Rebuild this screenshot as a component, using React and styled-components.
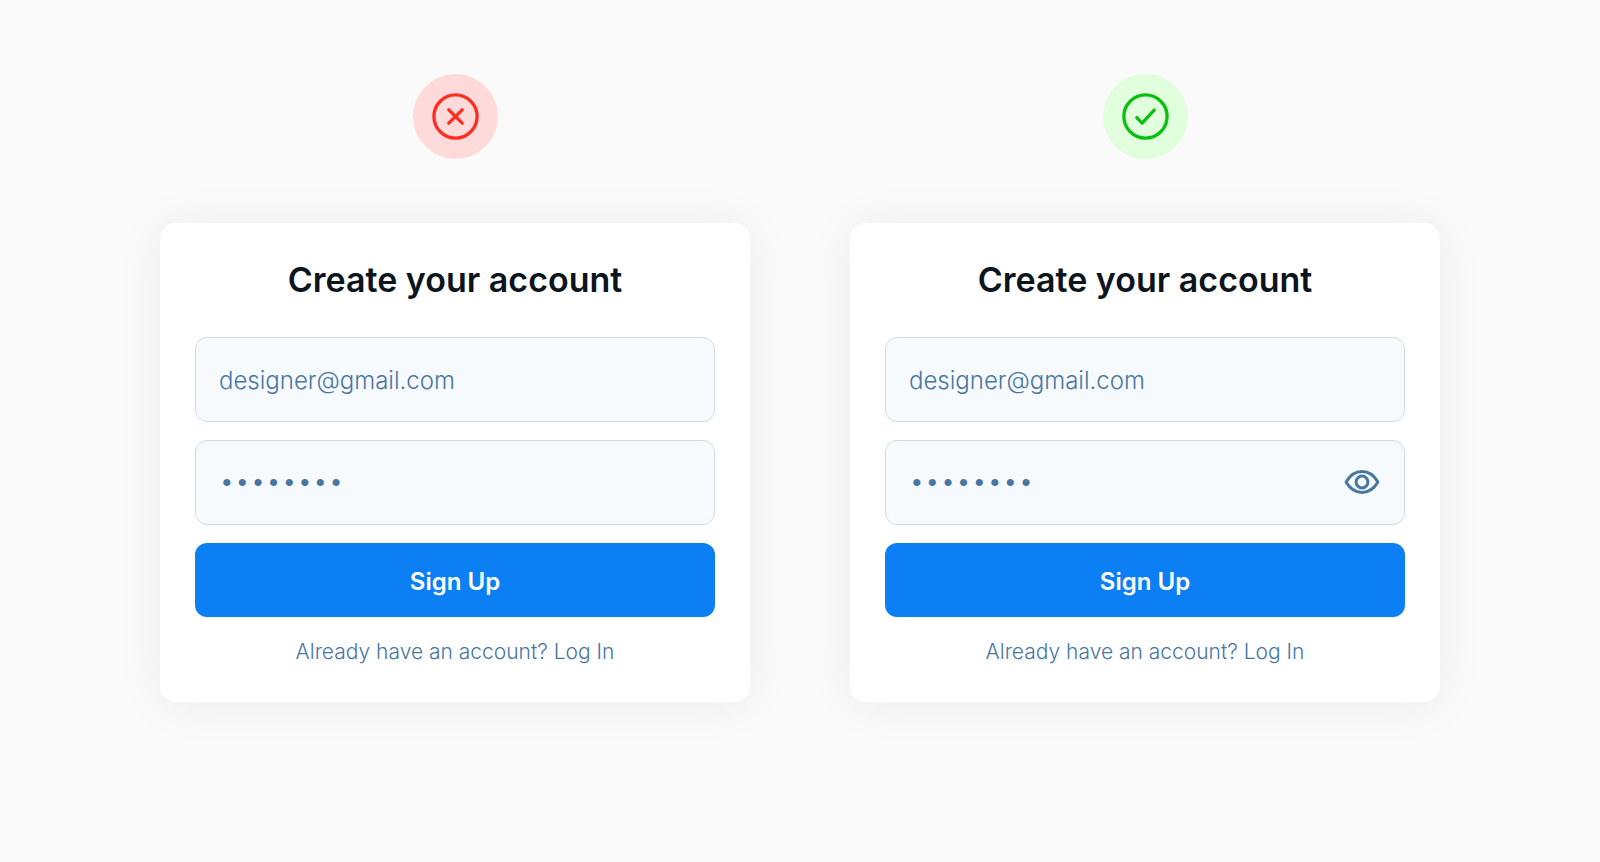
import React from 'react'
import styled, { createGlobalStyle } from 'styled-components'

const GlobalStyle = createGlobalStyle`
	*, *::before, *::after {
		box-sizing: border-box;
	}
	body {
		margin: 0;
		background: #fafafa;
		font-family: Inter, "Liberation Sans", sans-serif;
	}
`

const Page = styled.main`
	display: grid;
	grid-template-columns: repeat(auto-fit, minmax(400px, 1fr));
	gap: 100px;
	padding: 74px 10%;
`

const Example = styled.section`
	display: flex;
	flex-direction: column;
	align-items: center;
	gap: 64px;
`

const Badge = styled.div`
	display: flex;
	align-items: center;
	justify-content: center;
	width: 85px;
	height: 85px;
	border-radius: 50%;
	color: ${props => props.$good ? '#0abf10' : '#fd2e20'};
	background: ${props => props.$good ? '#e1ffdc' : '#ffdada'};
`

const Card = styled.form`
	display: flex;
	flex-direction: column;
	gap: 18px;
	width: 100%;
	padding: 35px 35px 33px;
	border-radius: 16px;
	background: #fff;
	box-shadow: 0 2px 50px rgba(0, 0, 0, 0.06);
`

const Title = styled.h2`
	margin: 0 0 17px;
	font-size: 34px;
	font-weight: 600;
	line-height: 44px;
	text-align: center;
	color: #0c141d;
`

const Field = styled.div`
	position: relative;
`

const Input = styled.input`
	display: block;
	width: 100%;
	height: 85px;
	padding: 2px 23px 0;
	border: 1px solid #cfdce9;
	border-radius: 12px;
	outline: none;
	background: #f6fafd;
	color: #4876a3;
	font-family: inherit;
	font-size: 24px;
	font-weight: 300;
	&:focus {
		border-color: #0d7ff4;
	}
`

const PasswordInput = styled(Input)`
	font-family: "Liberation Mono", monospace;
	font-size: 26px;
`

const EyeButton = styled.button`
	position: absolute;
	top: 0;
	bottom: 0;
	right: 0;
	display: flex;
	align-items: center;
	padding: 0 25px;
	border: 0;
	background: none;
	color: #4876a3;
	cursor: pointer;
`

const SubmitButton = styled.button`
	height: 74px;
	padding: 2px 24px 0;
	border: 0;
	border-radius: 12px;
	background: #0d7ff4;
	color: #fff;
	font-family: inherit;
	font-size: 24px;
	font-weight: 600;
	cursor: pointer;
`

const Footnote = styled.p`
	margin: 0;
	font-size: 21px;
	font-weight: 300;
	line-height: 34px;
	text-align: center;
	color: #4876a3;
`

const LoginLink = styled.a`
	color: inherit;
	text-decoration: none;
`

const CrossIcon = () => (
	<svg width="47" height="47" viewBox="-23.5 -23.5 47 47" fill="none" stroke="currentColor" strokeWidth="3.3" strokeLinecap="round" aria-hidden="true">
		<circle r="21.6" />
		<path d="M-6.7 -6.7L6.7 6.7M6.7 -6.7L-6.7 6.7" />
	</svg>
)

const CheckIcon = () => (
	<svg width="47" height="47" viewBox="-23.5 -23.5 47 47" fill="none" stroke="currentColor" strokeWidth="3.3" strokeLinecap="round" strokeLinejoin="round" aria-hidden="true">
		<circle r="21.6" />
		<path d="M-8.7 1.1L-3.4 6.6L8.7 -6.4" />
	</svg>
)

const EyeIcon = () => (
	<svg width="36" height="26" viewBox="-18 -12 36 26" fill="none" stroke="currentColor" strokeWidth="3" aria-hidden="true">
		<path strokeLinejoin="round" d="M-15.9 0C-12 -6.8 -6.3 -10.4 0 -10.4S12 -6.8 15.9 0C12 6.8 6.3 10.4 0 10.4S-12 6.8 -15.9 0Z" />
		<circle r="5.9" />
	</svg>
)

const SignUpForm = ({ id, good, showEye }) => (
	<Example>
		<Badge $good={good}>{good ? <CheckIcon /> : <CrossIcon />}</Badge>
		<Card onSubmit={e => e.preventDefault()}>
			<Title>Create your account</Title>
			<Field>
				<Input id={`${id}-email`} type="email" aria-label="Email" defaultValue="designer@gmail.com" />
			</Field>
			<Field>
				<PasswordInput id={`${id}-password`} type="password" aria-label="Password" defaultValue="password" />
				{showEye && <EyeButton type="button" aria-label="Show password"><EyeIcon /></EyeButton>}
			</Field>
			<SubmitButton type="submit">Sign Up</SubmitButton>
			<Footnote>
				Already have an account? <LoginLink href="#login">Log In</LoginLink>
			</Footnote>
		</Card>
	</Example>
)

export default function App() {
	return (
		<>
			<GlobalStyle />
			<Page>
				<SignUpForm id="plain" />
				<SignUpForm id="reveal" good showEye />
			</Page>
		</>
	)
}
